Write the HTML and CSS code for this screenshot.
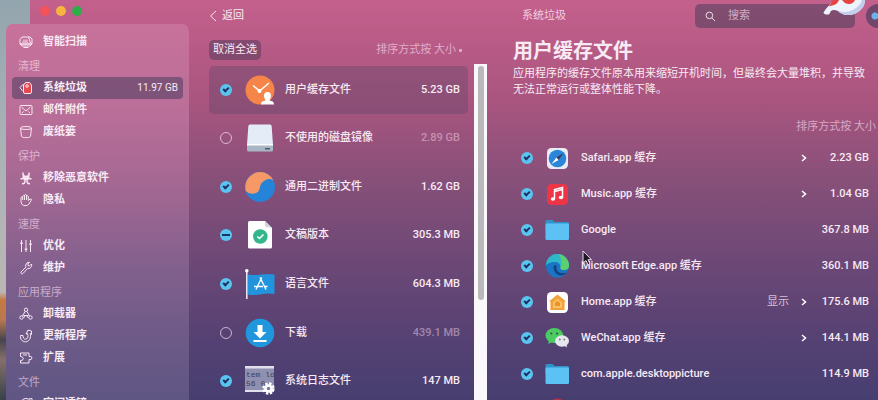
FILE: index.html
```html
<!DOCTYPE html>
<html lang="zh-CN">
<head>
  <meta charset="UTF-8" />
  <meta name="viewport" content="width=device-width, initial-scale=1.0" />
  <title>系统垃圾</title>
  <link rel="stylesheet" href="styles.css">
</head>
<body>
  <div class="window">
    <aside class="sidebar">
      <div class="traffic">
        <button class="light red" aria-label="关闭"></button>
        <button class="light yellow" aria-label="最小化"></button>
        <button class="light green" aria-label="缩放"></button>
      </div>
      <nav class="menu">
        <a href="#" class="menu-item">
          <svg viewBox="0 0 14 14"><path d="M3 2h8l2 2v5H1V4.500zM1 9h12l-2 2H3zM4.500 12.500h5M9.500 2l2 6"/><path d="M4 4.500h4.500l1 3.500H3z" fill="#fbe6f3" opacity=".5" stroke="none"/></svg>
          <span>智能扫描</span>
        </a>
        <h3>清理</h3>
        <a href="#" class="menu-item active">
          <svg viewBox="0 0 14 14"><path d="M4.500 3L1 6.500 3.500 10"/><path d="M6.500 1.500h4l2 2.500v7q0 1.500-1.500 1.500H6q-1.500 0-1.500-1.500V4z" fill="#e5484d"/><circle cx="8" cy="5" r="1.300"/></svg>
          <span>系统垃圾</span>
          <span class="menu-size">11.97 GB</span>
        </a>
        <a href="#" class="menu-item">
          <svg viewBox="0 0 14 14"><rect x="1" y="2.500" width="12" height="9" rx="1"/><path d="M2.500 4L7 8l4.500-4M3 10l1.500-1.500M11 10L9.500 8.500"/></svg>
          <span>邮件附件</span>
        </a>
        <a href="#" class="menu-item">
          <svg viewBox="0 0 14 14"><ellipse cx="7" cy="3" rx="5.500" ry="1.500"/><path d="M1.500 3l1 8.500c1 1.500 8 1.500 9 0l1-8.500"/></svg>
          <span>废纸篓</span>
        </a>
        <h3>保护</h3>
        <a href="#" class="menu-item">
          <svg viewBox="0 0 14 14"><path stroke-width="1.500" d="M4 1.500c-.5 3 1 4 3 4s3.500-1 3-4M1.500 8c3-1 4.500 0 4.500 2s-1 3-3 2.500M12.500 8C9.500 7 8 8 8 10s1 3 3 2.500M7 5.500V9M3.500 5.500L7 8l3.500-2.500"/></svg>
          <span>移除恶意软件</span>
        </a>
        <a href="#" class="menu-item">
          <svg viewBox="0 0 14 14"><path d="M2 8V4.500q.9-1 1.700 0V3q.8-1.200 1.800 0V2q1-1 2 0v1q1-.8 1.800.3V7.500L11 6q2-.2 1.300 1.200L10 11q-1.500 2-4 1.700Q2 12.500 2 8zM3.700 4.500V7M5.500 3v4M7.500 3v4"/></svg>
          <span>隐私</span>
        </a>
        <h3>速度</h3>
        <a href="#" class="menu-item">
          <svg viewBox="0 0 14 14"><path d="M2.500 1v12M7 1v12M11.500 1v12"/><path stroke-width="2.500" d="M2.500 3.500v1.500M7 9.500v1.500M11.500 4.500V6"/></svg>
          <span>优化</span>
        </a>
        <a href="#" class="menu-item">
          <svg viewBox="0 0 14 14"><path d="M10.500 1.300Q7.500 1 6.700 4q0 1.500.3 2L2 11q-.5 1.300.7 1.800.8.2 1.500-.5L8.500 7.500q3 .5 4-2 .4-1.500 0-2.500l-2 2-1.500-.5-.2-1.500z"/></svg>
          <span>维护</span>
        </a>
        <h3>应用程序</h3>
        <a href="#" class="menu-item">
          <svg viewBox="0 0 14 14"><circle cx="7" cy="2.800" r="1.700"/><circle cx="2.500" cy="10.500" r="1.700"/><circle cx="11.500" cy="10.500" r="1.700"/><path d="M6 4.500L3.500 9M8 4.500L10.500 9M4.500 8.500h5M4.500 11L7 8l2.500 3"/></svg>
          <span>卸载器</span>
        </a>
        <a href="#" class="menu-item">
          <svg viewBox="0 0 14 14"><path d="M9 1l3.500 1v3.500l-1.300-1C12.500 9 10 12.800 6.500 12.800 3 12.800 1 10 1.500 6.500H4c0 2.500 1 3.700 2.500 3.700C9 10.200 9.500 7 8.500 4.500L7 5z"/></svg>
          <span>更新程序</span>
        </a>
        <a href="#" class="menu-item">
          <svg viewBox="0 0 14 14"><path d="M1.500 2h8.500v3.500q2.500-1 3 1.500-.5 2.500-3 1.500V12H1.500V9.500Q4 10 4.300 7.500 4 5.500 1.500 5.500V2M4 4h4"/></svg>
          <span>扩展</span>
        </a>
        <h3>文件</h3>
        <a href="#" class="menu-item">
          <svg viewBox="0 0 14 14"><circle cx="7" cy="7" r="5.500"/><path d="M10 2l3-.5v3"/></svg>
          <span>空间透镜</span>
        </a>
      </nav>
    </aside>

    <section class="groups">
      <button class="back">
        <svg viewBox="0 0 8 12"><path d="M7 1L1.500 6 7 11"/></svg>
        返回
      </button>
      <div class="groups-bar">
        <button class="deselect">取消全选</button>
        <button class="sort">排序方式按 大小 <i class="caret"></i></button>
      </div>
      <ul class="group-list">
        <li class="group selected">
          <input type="checkbox" id="g1" checked>
          <svg class="group-icon" viewBox="0 0 30 30"><circle cx="15" cy="15" r="14.500" fill="#f6854a"/><path d="M8 10.500l6.500 5.500L24 8" fill="none" stroke="#fff" stroke-width="1.500"/><circle cx="14.500" cy="16" r="2" fill="#fff"/><path d="M16 29.500c0-3 2-3.500 4.500-4 0-1-1.500-2-1.500-4.500 0-2.500 1-4 3.500-4s3.500 1.500 3.500 4c0 2.500-1.500 3.500-1.500 4.500 2.500.5 4.500 1 4.500 4z" fill="#fff"/></svg>
          <label for="g1">用户缓存文件</label>
          <span class="size">5.23 GB</span>
        </li>
        <li class="group off">
          <input type="checkbox" id="g2">
          <svg class="group-icon" viewBox="0 0 30 30"><path d="M5 1.500h20q1.500 0 1.700 2L28 22H2L3.300 3.500q.2-2 1.700-2z" fill="#e4edf7"/><path d="M2 21h26v6q0 1.500-1.500 1.500h-23Q2 28.500 2 27z" fill="#a9b6c6"/><path d="M2 21h26v1.500H2z" fill="#fff"/><path d="M20 25h5v1.500h-5z" fill="#4d5b6c"/></svg>
          <label for="g2">不使用的磁盘镜像</label>
          <span class="size">2.89 GB</span>
        </li>
        <li class="group">
          <input type="checkbox" id="g3" checked>
          <svg class="group-icon" viewBox="0 0 30 30"><circle cx="15" cy="15" r="15" fill="#2583d8"/><path d="M.8 19A15 15 0 0 1 15 0Q24 0 28.500 8.500 25 6 20.500 8 15.500 10.500 15 15q-.5 5.500-5.500 6.500Q4 22.500.8 19z" fill="#f79867"/></svg>
          <label for="g3">通用二进制文件</label>
          <span class="size">1.62 GB</span>
        </li>
        <li class="group">
          <input type="checkbox" id="g4" class="mixed">
          <svg class="group-icon" viewBox="0 0 30 30"><path d="M4.500 1H20l7 7v19q0 1.500-1.500 1.500h-21Q3 28.500 3 27V2.500Q3 1 4.500 1z" fill="#fff"/><path d="M20 1v5.500L27 8z" fill="#cfd3df"/><circle cx="15.300" cy="16.500" r="7.300" fill="#33b68b"/><path d="M12.300 16.500l2.200 2 4-4" fill="none" stroke="#fff" stroke-width="1.500"/></svg>
          <label for="g4">文稿版本</label>
          <span class="size">305.3 MB</span>
        </li>
        <li class="group">
          <input type="checkbox" id="g5" checked>
          <svg class="group-icon" viewBox="0 0 30 30"><path d="M3 5.500q7 1 13 0t13.500 0V25q-7-1-13 .3T3 25.500z" fill="#2194dd"/><path d="M1 2h1.600v28H1z" fill="#e9e4f2"/><circle cx="1.800" cy="1.800" r="1.800" fill="#fff"/><path d="M16.800 8.500L11 20.500M15 8.500l6 12M9 17.500h9M19.500 17.500h3" fill="none" stroke="#fff" stroke-width="1.400"/></svg>
          <label for="g5">语言文件</label>
          <span class="size">604.3 MB</span>
        </li>
        <li class="group off">
          <input type="checkbox" id="g6">
          <svg class="group-icon" viewBox="0 0 30 30"><circle cx="15" cy="15" r="14.300" fill="#2097dc"/><path d="M12.500 7h5v7h4L15 20.500 8.500 14h4zM8.500 22h13v2h-13z" fill="#fff"/></svg>
          <label for="g6">下载</label>
          <span class="size">439.1 MB</span>
        </li>
        <li class="group">
          <input type="checkbox" id="g7" checked>
          <svg class="group-icon" viewBox="0 0 30 30"><path d="M0 0h29v26H0z" fill="#8f90b0"/><path d="M0 0h29v2.500H0zM0 24h29v2H0z" fill="#e2dfed"/><text x="1" y="11" class="log-text">tem lo</text><text x="1" y="20" class="log-text">56 0</text><circle cx="23.500" cy="22.500" r="4.300" fill="#fff"/><circle cx="23.500" cy="22.500" r="5" fill="none" stroke="#fff" stroke-width="2.400" stroke-dasharray="2.400 1.527"/><circle cx="23.500" cy="22.500" r="1.700" fill="#74739c"/></svg>
          <label for="g7">系统日志文件</label>
          <span class="size">147 MB</span>
        </li>
      </ul>
    </section>

    <div class="scroll-track"><div class="scroll-thumb"></div></div>

    <main class="detail">
      <header class="topbar">
        <span class="crumb">系统垃圾</span>
        <div class="search">
          <svg viewBox="0 0 12 12"><circle cx="4.800" cy="4.800" r="3.600"/><path d="M7.500 7.500L11 11"/></svg>
          <input type="search" placeholder="搜索" aria-label="搜索">
          <svg class="mascot" viewBox="0 0 44 16"><path d="M12 0H43q0 6-5 10.500-6 5-13 4.500-5-.3-9-4-5-2-7 0-1 1.500-2 3.500Q2 15 1.500 12.500 3 9.500 6.500 6z" fill="#eef2fb"/><path d="M16 11q10 3 18-3 5-4 6-8h3q0 6-5 10.500-6 5-13 4.500-5-.3-9-4z" fill="#c3cdec"/><path d="M11 0h6q-1.500 4-5 5-3 .5-5 1.500zM20 0h13q-2 4.500-7 4-4-.8-6-4z" fill="#e6433f"/></svg>
        </div>
        <button class="assistant" aria-label="助手"></button>
      </header>
      <h1>用户缓存文件</h1>
      <p class="about">应用程序的缓存文件原本用来缩短开机时间，但最终会大量堆积，并导致无法正常运行或整体性能下降。</p>
      <button class="sort detail-sort">排序方式按 大小</button>
      <ul class="file-list">
        <li class="file">
          <input type="checkbox" id="f1" checked>
          <svg class="file-icon" viewBox="0 0 24 24"><rect x="2" y="2" width="21" height="21" rx="4.500" fill="#e9edf5"/><circle cx="12.500" cy="12.500" r="8.800" fill="#2b86d9"/><path d="M18.500 7l-5 7-2-2.500z" fill="#3b3552"/><path d="M6.500 18l5-6.500 2 2.500z" fill="#fff"/></svg>
          <label for="f1">Safari.app 缓存</label>
          <svg class="chevron" viewBox="0 0 6 8"><path d="M1 1l3.500 3L1 7"/></svg>
          <span class="size">2.23 GB</span>
        </li>
        <li class="file">
          <input type="checkbox" id="f2" checked>
          <svg class="file-icon" viewBox="0 0 24 24"><rect x="2" y="2" width="21" height="21" rx="4.500" fill="#ee3548"/><path d="M9.500 16.500V7.500l8-2v9.500M9.500 9.500l8-2" fill="none" stroke="#fff" stroke-width="1.500"/><ellipse cx="8" cy="17" rx="2.200" ry="1.800" fill="#fff"/><ellipse cx="16" cy="15.500" rx="2.200" ry="1.800" fill="#fff"/></svg>
          <label for="f2">Music.app 缓存</label>
          <svg class="chevron" viewBox="0 0 6 8"><path d="M1 1l3.500 3L1 7"/></svg>
          <span class="size">1.04 GB</span>
        </li>
        <li class="file">
          <input type="checkbox" id="f3" checked>
          <svg class="file-icon" viewBox="0 0 24 24"><path d="M.5 3.500q0-1.500 1.500-1.500h5.500l2 2H22.500q1.500 0 1.500 1.500V12H.5z" fill="#3292cc"/><rect x=".5" y="5.500" width="23.500" height="16.500" rx="1.200" fill="#5cc2f4"/></svg>
          <label for="f3">Google</label>
          <span class="size">367.8 MB</span>
        </li>
        <li class="file">
          <input type="checkbox" id="f4" checked>
          <svg class="file-icon" viewBox="0 0 24 24"><circle cx="12.500" cy="12" r="11.500" fill="#1b75c4"/><path d="M1 11.500A11.500 11.500 0 0 1 24 11q.3 5-5 5-4 0-3.500-3 0-4-4.500-5Q4 7.500 1 11.500z" fill="#2fb6c8"/><path d="M14 .6A11.500 11.500 0 0 1 24 11q.3 5-5 5-4 0-3.500-3Q18 7 14 .6z" fill="#5fce6c"/><path d="M8.500 13q0 7 7 8.500 4 0 6.500-3-5 1.800-8.500-.5-3-2.500-2-7-3 0-3 2z" fill="#14427f"/></svg>
          <label for="f4">Microsoft Edge.app 缓存</label>
          <span class="size">360.1 MB</span>
        </li>
        <li class="file">
          <input type="checkbox" id="f5" checked>
          <svg class="file-icon" viewBox="0 0 24 24"><rect x="2" y="2" width="21" height="21" rx="4.500" fill="#fff"/><path d="M12.500 4.500L20.500 11l-1 1.200V20h-14v-7.800L4.500 11z" fill="#f2a03a"/><path d="M12.500 8.500l4.500 3.700V18H8v-5.800z" fill="#f8bf63"/><path d="M12.500 11l2.500 2v3h-5v-3z" fill="#ee9028"/></svg>
          <label for="f5">Home.app 缓存</label>
          <a href="#" class="reveal">显示</a>
          <svg class="chevron" viewBox="0 0 6 8"><path d="M1 1l3.500 3L1 7"/></svg>
          <span class="size">175.6 MB</span>
        </li>
        <li class="file">
          <input type="checkbox" id="f6" checked>
          <svg class="file-icon" viewBox="0 0 24 24"><ellipse cx="9.300" cy="9.500" rx="8.800" ry="7.500" fill="#4ccb63"/><path d="M4 14l-.8 4 4-2z" fill="#4ccb63"/><ellipse cx="17" cy="15" rx="7" ry="5.800" fill="#e6e6ee"/><path d="M19 19.500l3 2-.5-3.500z" fill="#e6e6ee"/><g fill="#2b5b49"><circle cx="6.300" cy="7.500" r="1.100"/><circle cx="12" cy="7.500" r="1.100"/></g><g fill="#777"><circle cx="14.800" cy="13.500" r=".9"/><circle cx="19.300" cy="13.500" r=".9"/></g></svg>
          <label for="f6">WeChat.app 缓存</label>
          <svg class="chevron" viewBox="0 0 6 8"><path d="M1 1l3.500 3L1 7"/></svg>
          <span class="size">144.1 MB</span>
        </li>
        <li class="file">
          <input type="checkbox" id="f7" checked>
          <svg class="file-icon" viewBox="0 0 24 24"><path d="M.5 3.500q0-1.500 1.500-1.500h5.500l2 2H22.500q1.500 0 1.500 1.500V12H.5z" fill="#3292cc"/><rect x=".5" y="5.500" width="23.500" height="16.500" rx="1.200" fill="#5cc2f4"/></svg>
          <label for="f7">com.apple.desktoppicture</label>
          <span class="size">114.9 MB</span>
        </li>
        <li class="file">
          <input type="checkbox" id="f8" aria-label="缓存" checked>
          <svg class="file-icon" viewBox="0 0 24 24"><circle cx="12.500" cy="11.500" r="11" fill="#b92f45"/></svg>
        </li>
      </ul>
    </main>
  </div>

  <svg class="cursor" viewBox="0 0 10 16"><path d="M1 1v12l3-2.500 2 4.500 2-1-2-4.300h3.500z"/></svg>
</body>
</html>
```
FILE: styles.css
```css
:root {
  --text: #f8eaf4;
  --muted: rgba(255, 225, 245, 0.6);
  --check: #5ac4f1;
  --check-mark: #1d3260;
}

* {
  box-sizing: border-box;
}

body {
  margin: 0;
  height: 100vh;
  overflow: hidden;
  font-family: Roboto, "Noto Sans CJK SC", sans-serif;
  font-size: 11px;
  line-height: 16px;
  color: var(--text);
  background: linear-gradient(#93a5ae 0%, #a9b2b6 35%, #bab6b4 73%, #c67a42 75%, #b97850 80%, #47454f 85%, #84706a 90%, #37414b 100%);
}

h1,
h3,
p,
ul {
  margin: 0;
  padding: 0;
}

ul {
  list-style: none;
}

a {
  color: inherit;
  text-decoration: none;
}

button {
  padding: 0;
  border: none;
  background: none;
  color: inherit;
  font: inherit;
}

svg {
  display: block;
  flex: none;
}

.window {
  display: flex;
  height: 100%;
  margin-left: 30px;
  background: linear-gradient(#c4608c 0%, #a9557f 25%, #875079 45%, #6d4876 65%, #554173 85%, #473e70 100%);
}

/* sidebar */

.sidebar {
  flex: none;
  display: flex;
  flex-direction: column;
  width: 183px;
  margin-left: -24px;
}

.traffic {
  flex: none;
  display: flex;
  gap: 6px;
  height: 24px;
  padding: 6px 0 0 34px;
}

.light {
  width: 10px;
  height: 10px;
  border-radius: 50%;
}

.red {
  background: #f4515a;
}

.yellow {
  background: #f8b43c;
}

.green {
  background: #2cae48;
}

.menu {
  flex: 1;
  min-height: 0;
  padding: 7px 6px 0;
  border-radius: 7px 7px 0 0;
  background: linear-gradient(#c8729b 0%, #b86e98 25%, #a16792 45%, #82608d 65%, #6c5a87 85%, #5f5684 100%);
}

.menu h3 {
  height: 24px;
  padding: 6px 0 0 6px;
  font-size: 11px;
  font-weight: 400;
  color: var(--muted);
}

.menu-item {
  display: flex;
  align-items: center;
  height: 22px;
  padding: 0 5px 0 7px;
  border-radius: 4px;
  font-weight: 600;
}

.menu-item svg {
  width: 14px;
  height: 14px;
  margin-right: 10px;
  fill: none;
  stroke: #fbe6f3;
  stroke-width: 1;
}

.menu-item.active {
  background: rgba(85, 65, 100, 0.6);
}

.menu-size {
  margin-left: auto;
  font-size: 10px;
  font-weight: 400;
}

/* groups */

.groups {
  flex: none;
  width: 285px;
  padding: 0 6px 0 20px;
}

.back {
  display: flex;
  align-items: center;
  height: 32px;
}

.back svg {
  width: 8px;
  height: 12px;
  margin-right: 5px;
  fill: none;
  stroke: var(--text);
}

.groups-bar {
  display: flex;
  align-items: center;
  justify-content: space-between;
  height: 33px;
  padding: 3px 6px 0 0;
}

.deselect {
  height: 20px;
  padding: 0 4px;
  border-radius: 5px;
  background: rgba(80, 55, 90, 0.5);
}

.sort {
  display: flex;
  align-items: center;
  color: var(--muted);
}

.caret {
  width: 3px;
  height: 3px;
  margin-left: 3px;
  border-radius: 1px;
  background: var(--muted);
}

.group-list {
  display: grid;
  grid-template-rows: repeat(7, 1fr);
  height: 340px;
}

.group {
  display: flex;
  align-items: center;
  margin-top: 1px;
  padding: 0 8px 0 11px;
  border-radius: 5px;
  font-weight: 500;
}

.group.selected {
  background: rgba(75, 65, 100, 0.3);
}

.group-icon {
  width: 30px;
  height: 30px;
  margin: 0 10px 0 13px;
}

.log-text {
  font: 8px "Liberation Mono", monospace;
  fill: #3e3d5e;
}

.size {
  margin-left: auto;
}

.off .size {
  color: rgba(255, 225, 245, 0.45);
}

input[type="checkbox"] {
  appearance: none;
  flex: none;
  display: grid;
  place-items: center;
  width: 12px;
  height: 12px;
  margin: 0;
  border: 1px solid rgba(255, 225, 245, 0.7);
  border-radius: 50%;
}

input[type="checkbox"]:checked,
input[type="checkbox"].mixed {
  border: none;
  background: var(--check);
}

input[type="checkbox"]:checked::before {
  content: "";
  box-sizing: content-box;
  width: 4px;
  height: 2px;
  margin-bottom: 2px;
  border: solid var(--check-mark);
  border-width: 0 0 2px 2px;
  transform: rotate(-45deg);
}

input[type="checkbox"].mixed::before {
  content: "";
  width: 8px;
  height: 2px;
  background: var(--check-mark);
}

.scroll-track {
  flex: none;
  width: 13px;
  margin-top: 64px;
  padding: 2px 3px 0 4px;
  background: #fbf8fb;
}

.scroll-thumb {
  height: 70%;
  border-radius: 3px;
  background: #b9b8ba;
}

/* detail */

.detail {
  flex: 1;
  min-width: 0;
  padding-left: 26px;
}

.topbar {
  display: flex;
  align-items: center;
  height: 32px;
  padding-left: 9px;
  overflow: hidden;
}

.crumb {
  color: rgba(255, 235, 248, 0.8);
}

.search {
  position: relative;
  flex: none;
  display: flex;
  align-items: center;
  width: 160px;
  height: 24px;
  margin-left: auto;
  padding-left: 10px;
  border-radius: 5px;
  background: rgba(85, 65, 95, 0.6);
}

.search svg {
  width: 11px;
  height: 11px;
  fill: none;
  stroke: var(--text);
}

.search input {
  width: 80px;
  margin-left: 12px;
  padding: 0;
  border: none;
  outline: none;
  background: none;
  font: inherit;
  color: var(--text);
}

.search input::placeholder {
  color: rgba(255, 225, 245, 0.65);
}

.search .mascot {
  position: absolute;
  top: -4px;
  right: -11px;
  width: 44px;
  height: 16px;
  stroke: none;
}

.assistant {
  flex: none;
  width: 24px;
  height: 24px;
  margin: 0 -12px 0 11px;
  border-radius: 50%;
  background: radial-gradient(circle at 9px 12px, #6db4e4 3px, #71466c 4px);
}

.detail h1 {
  margin-top: 4px;
  font-size: 20px;
  line-height: 30px;
  font-weight: 700;
}

.about {
  padding-right: 12px;
}

.detail-sort {
  margin: 21px 2px 5px auto;
}

.file {
  display: flex;
  align-items: center;
  height: 36px;
  padding: 0 9px 0 8px;
  font-weight: 500;
}

.file-icon {
  width: 24px;
  height: 24px;
  margin: 0 12px;
}

.file .size {
  width: 66px;
  text-align: right;
}

.chevron {
  width: 6px;
  height: 8px;
  margin: 0 -4px 0 auto;
  fill: none;
  stroke: #fff;
  stroke-width: 1.5;
}

.chevron + .size {
  margin-left: 0;
}

.reveal {
  margin: 0 12px 0 auto;
  font-weight: 400;
  color: rgba(255, 235, 248, 0.75);
}

.reveal + .chevron {
  margin-left: 0;
}

.cursor {
  position: absolute;
  top: 250px;
  left: 582px;
  width: 10px;
  height: 16px;
  fill: #1d1725;
  stroke: #e9dfe9;
}
```
